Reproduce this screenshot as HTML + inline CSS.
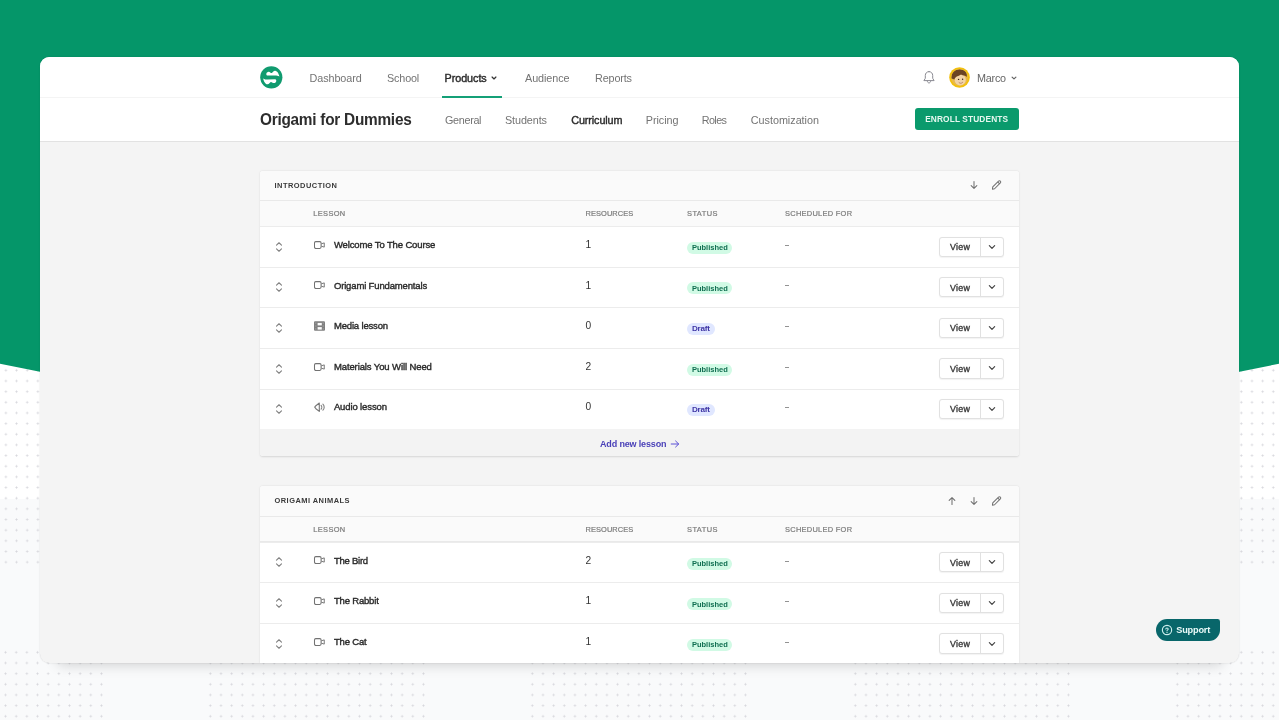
<!DOCTYPE html>
<html><head><meta charset="utf-8"><title>Origami for Dummies</title>
<style>
html,body{margin:0;padding:0}
body{width:1279px;height:720px;overflow:hidden;position:relative;background:#f9fafb;font-family:"Liberation Sans", sans-serif;}
.white{position:absolute;left:0;top:0;width:1279px;height:499px;background:#fff}
.green{position:absolute;left:0;top:0}
.dots{position:absolute;background-image:radial-gradient(circle at 50% 50%,#d6d6dc 0,#d6d6dc 0.7px,rgba(214,214,220,0) 1.35px);background-size:10.667px 10.667px}
.card{position:absolute;left:40px;top:57px;width:1199.3px;height:606.1px;background:#f4f4f4;border-radius:9.5px;overflow:hidden;will-change:transform;box-shadow:0 0 1.5px rgba(0,0,0,0.18)}
.shadow{position:absolute;left:56px;top:600px;width:1167.5px;height:56px;border-radius:8px;box-shadow:0 9px 13px rgba(0,0,0,0.17)}
.nav{position:absolute;left:0;top:0;width:100%;height:40px;background:#fff;border-bottom:1px solid #f4f4f4}
.sub{position:absolute;left:0;top:41px;width:100%;height:42.8px;background:#fff;border-bottom:1.6px solid #e2e2e2}
.t{position:absolute;white-space:pre;line-height:1}
.i{position:absolute;overflow:visible}
.ul{position:absolute;left:402px;top:39px;width:60px;height:1.6px;background:#14a077}
.btn{position:absolute;left:874.5px;top:50.8px;width:104.5px;height:22.5px;border-radius:3px;background:#0a9a6c}
.sec{position:absolute;left:219.5px;width:759.6px;background:#fff;border-radius:3px;box-shadow:0 0.8px 2px rgba(0,0,0,0.13);}
.sh{position:absolute;left:0;top:0;width:100%;height:29.6px;background:#fafafa;border-bottom:1px solid #e9e9e9;border-radius:3px 3px 0 0}
.ch{position:absolute;left:0;top:30.6px;width:100%;height:24.7px;background:#fafafa;border-bottom:1px solid #e9e9e9}
.row{position:absolute;left:0;width:100%;height:40.58px;background:linear-gradient(#ececec,#ececec) 0 0/100% 1px no-repeat #fff}
.ft{position:absolute;left:0;width:100%;height:27.3px;background:#f3f3f3;border-radius:0 0 3px 3px}
.bd{position:absolute;border-radius:7px}
.pub{background:#d1fae5}
.dr{background:#e0e7ff}
.dash{position:absolute;width:3.4px;height:1px;background:#939393}
.vb{position:absolute;width:64.6px;height:20.2px;box-sizing:border-box;border:1px solid #e1e1e1;border-radius:3px;background:#fff;box-shadow:0 0.7px 1px rgba(0,0,0,0.05)}
.vb i{position:absolute;left:40.2px;top:0;width:1px;height:100%;background:#e1e1e1}
.support{position:absolute;left:1116.3px;top:561.7px;width:64.2px;height:22.4px;background:#08666a;border-radius:11.2px 2.5px 11.2px 11.2px}
</style></head><body>
<div class="white"></div>
<div class="dots" style="left:-106.50px;top:364.92px;width:224.01px;height:202.67px;"></div><div class="dots" style="left:1235.87px;top:364.92px;width:224.01px;height:202.67px;"></div><div class="dots" style="left:-116.87px;top:647.17px;width:224.01px;height:85.34px;"></div><div class="dots" style="left:205.42px;top:647.17px;width:224.01px;height:85.34px;"></div><div class="dots" style="left:527.17px;top:647.17px;width:224.01px;height:85.34px;"></div><div class="dots" style="left:849.67px;top:647.17px;width:224.01px;height:85.34px;"></div><div class="dots" style="left:1172.17px;top:647.17px;width:224.01px;height:85.34px;"></div>
<svg class="green" width="1279" height="500" viewBox="0 0 1279 500"><polygon points="0,0 1279,0 1279,363.8 639.5,491.7 0,363.8" fill="#059669"/></svg>
<div class="shadow"></div>
<div class="card">
 <div class="nav"></div>
 <div class="sub"></div>
 <div class="ul"></div>
 <svg class="i" style="left:219.9px;top:9.1px" width="22.6" height="22.6" viewBox="0 0 24 24"><circle cx="12" cy="12" r="11.8" fill="#109b6f"/><path d="M6.7 8.7 C6.7 6.9 8.4 5.9 10 6.3 C11.1 6.6 11.6 7.7 12.5 7.4 C13.5 7.1 14.3 4.9 16.1 5 C18.6 5.2 20.1 8.5 20.6 11.2 C19.2 10.1 17.6 10 16 10 L8.2 10.2 C7.3 10.2 6.7 9.6 6.7 8.7 Z" fill="#fff"/><path transform="rotate(180 12 12.2)" d="M6.7 8.7 C6.7 6.9 8.4 5.9 10 6.3 C11.1 6.6 11.6 7.7 12.5 7.4 C13.5 7.1 14.3 4.9 16.1 5 C18.6 5.2 20.1 8.5 20.6 11.2 C19.2 10.1 17.6 10 16 10 L8.2 10.2 C7.3 10.2 6.7 9.6 6.7 8.7 Z" fill="#fff"/></svg>
 <svg class="i" style="left:449.40px;top:15.90px" width="10" height="10" viewBox="0 0 10 10"><path d="M3.10 4.05 L5 5.95 L6.90 4.05" fill="none" stroke="#333" stroke-width="1.25" stroke-linecap="round" stroke-linejoin="round"/></svg>
 <svg class="i" style="left:882.2px;top:13px" width="14" height="15" viewBox="0 0 14 15"><path d="M7 1.6 C4.7 1.6 3.3 3.4 3.3 5.5 L3.3 8.3 L1.9 10.6 L12.1 10.6 L10.7 8.3 L10.7 5.5 C10.7 3.4 9.3 1.6 7 1.6 Z M5.3 11 C5.4 12.2 6.1 12.9 7 12.9 C7.9 12.9 8.6 12.2 8.7 11" fill="none" stroke="#8b8b93" stroke-width="1" stroke-linejoin="round" stroke-linecap="round"/></svg>
 <svg class="i" style="left:909px;top:10px" width="21" height="21" viewBox="0 0 21 21"><defs><clipPath id="av"><circle cx="10.5" cy="10.5" r="8.4"/></clipPath></defs><circle cx="10.5" cy="10.5" r="10.3" fill="#f2c00e"/><g clip-path="url(#av)"><rect x="0" y="0" width="21" height="21" fill="#e9b949"/><ellipse cx="11.2" cy="12.8" rx="5.6" ry="5.6" fill="#f1d3a6"/><path d="M2.5 11.5 C2 5 7 2.2 11 2.6 C15.5 2.6 18.5 5.5 17.8 10 C16.5 8.5 14 8.8 12 7.6 C10 9.4 6.5 9 5.4 12.6 Z" fill="#6b4423"/><circle cx="9.6" cy="12.4" r="0.7" fill="#3a2a1a"/><circle cx="13.6" cy="12.2" r="0.7" fill="#3a2a1a"/><path d="M9.8 15.4 C11 16.4 12.8 16.3 13.8 15.2" stroke="#a0522d" stroke-width="0.7" fill="#fff"/></g></svg>
 <svg class="i" style="left:969.30px;top:15.50px" width="10" height="10" viewBox="0 0 10 10"><path d="M3.10 4.05 L5 5.95 L6.90 4.05" fill="none" stroke="#666" stroke-width="1.2" stroke-linecap="round" stroke-linejoin="round"/></svg>
 <div class="btn"></div>
 <span class="t" style="left:269.50px;top:15.86px;font-size:10.8px;color:#737373;letter-spacing:-0.072px;">Dashboard</span>
<span class="t" style="left:347.00px;top:15.86px;font-size:10.8px;color:#737373;letter-spacing:-0.153px;">School</span>
<span class="t" style="left:404.50px;top:15.86px;font-size:10.8px;color:#2b2b2b;letter-spacing:-0.051px;-webkit-text-stroke:0.4px #2b2b2b;">Products</span>
<span class="t" style="left:485.00px;top:15.86px;font-size:10.8px;color:#737373;letter-spacing:-0.076px;">Audience</span>
<span class="t" style="left:555.00px;top:15.86px;font-size:10.8px;color:#737373;letter-spacing:-0.135px;">Reports</span>
<span class="t" style="left:936.90px;top:15.86px;font-size:10.8px;color:#666;letter-spacing:-0.200px;">Marco</span>
<span class="t" style="left:220.00px;top:54.29px;font-size:16.2px;color:#2d2d2d;letter-spacing:-0.272px;font-weight:700;transform:scaleX(0.95);transform-origin:0 0;">Origami for Dummies</span>
<span class="t" style="left:405.00px;top:57.86px;font-size:10.8px;color:#737373;letter-spacing:-0.320px;">General</span>
<span class="t" style="left:465.00px;top:57.86px;font-size:10.8px;color:#737373;letter-spacing:-0.089px;">Students</span>
<span class="t" style="left:531.25px;top:57.86px;font-size:10.8px;color:#2b2b2b;letter-spacing:-0.106px;-webkit-text-stroke:0.4px #2b2b2b;">Curriculum</span>
<span class="t" style="left:605.75px;top:57.86px;font-size:10.8px;color:#737373;letter-spacing:-0.044px;">Pricing</span>
<span class="t" style="left:661.75px;top:57.86px;font-size:10.8px;color:#737373;letter-spacing:-0.590px;">Roles</span>
<span class="t" style="left:710.75px;top:57.86px;font-size:10.8px;color:#737373;letter-spacing:-0.014px;">Customization</span>
<span class="t" style="left:885.20px;top:58.17px;font-size:8.3px;color:#e6f8f0;letter-spacing:0.130px;font-weight:700;">ENROLL STUDENTS</span>
 <div class="sec" style="top:113.50px;height:285.90px">
<div class="sh"></div><div class="ch"></div>
<div class="row" style="top:55.70px">
<svg class="i" style="left:14.50px;top:13.60px" width="10" height="14" viewBox="0 0 10 14"><path d="M2.5 5.2 L5 2.75 L7.5 5.2 M2.5 8.8 L5 11.25 L7.5 8.8" fill="none" stroke="#828282" stroke-width="1.1" stroke-linecap="round" stroke-linejoin="round"/></svg>
<svg class="i" style="left:53.80px;top:12.60px" width="13" height="12" viewBox="0 0 13 12"><rect x="1.5" y="2.6" width="6.6" height="6.8" rx="1.3" fill="none" stroke="#727272" stroke-width="1.05"/><path d="M8.4 4.8 L11.25 3.9 L11.25 8.1 L8.4 7.2" fill="none" stroke="#727272" stroke-width="0.95" stroke-linejoin="round"/></svg>
<div class="bd pub" style="left:427.60px;top:15.7px;width:45.2px;height:12px"></div>
<div class="dash" style="left:525.70px;top:18.7px"></div>
<div class="vb" style="left:679.80px;top:10.4px"><i></i></div>
<svg class="i" style="left:727.80px;top:15.50px" width="10" height="10" viewBox="0 0 10 10"><path d="M2.35 3.65 L5 6.35 L7.65 3.65" fill="none" stroke="#444" stroke-width="1.2" stroke-linecap="round" stroke-linejoin="round"/></svg>
</div>
<div class="row" style="top:96.28px">
<svg class="i" style="left:14.50px;top:13.60px" width="10" height="14" viewBox="0 0 10 14"><path d="M2.5 5.2 L5 2.75 L7.5 5.2 M2.5 8.8 L5 11.25 L7.5 8.8" fill="none" stroke="#828282" stroke-width="1.1" stroke-linecap="round" stroke-linejoin="round"/></svg>
<svg class="i" style="left:53.80px;top:12.60px" width="13" height="12" viewBox="0 0 13 12"><rect x="1.5" y="2.6" width="6.6" height="6.8" rx="1.3" fill="none" stroke="#727272" stroke-width="1.05"/><path d="M8.4 4.8 L11.25 3.9 L11.25 8.1 L8.4 7.2" fill="none" stroke="#727272" stroke-width="0.95" stroke-linejoin="round"/></svg>
<div class="bd pub" style="left:427.60px;top:15.7px;width:45.2px;height:12px"></div>
<div class="dash" style="left:525.70px;top:18.7px"></div>
<div class="vb" style="left:679.80px;top:10.4px"><i></i></div>
<svg class="i" style="left:727.80px;top:15.50px" width="10" height="10" viewBox="0 0 10 10"><path d="M2.35 3.65 L5 6.35 L7.65 3.65" fill="none" stroke="#444" stroke-width="1.2" stroke-linecap="round" stroke-linejoin="round"/></svg>
</div>
<div class="row" style="top:136.86px">
<svg class="i" style="left:14.50px;top:13.60px" width="10" height="14" viewBox="0 0 10 14"><path d="M2.5 5.2 L5 2.75 L7.5 5.2 M2.5 8.8 L5 11.25 L7.5 8.8" fill="none" stroke="#828282" stroke-width="1.1" stroke-linecap="round" stroke-linejoin="round"/></svg>
<svg class="i" style="left:53.80px;top:12.45px" width="13" height="12" viewBox="0 0 13 12"><rect x="1" y="1.2" width="11" height="9.6" rx="1.1" fill="#7f7f7f"/><rect x="4.6" y="2.9" width="4.2" height="2.5" fill="#fbfbfb"/><rect x="4.6" y="7.1" width="4.2" height="2.5" fill="#fbfbfb"/><rect x="2.2" y="2.5" width="1.2" height="1.2" fill="#a3a3a3"/><rect x="2.2" y="5.4" width="1.2" height="1.2" fill="#a3a3a3"/><rect x="2.2" y="8.3" width="1.2" height="1.2" fill="#a3a3a3"/><rect x="9.6" y="2.5" width="1.2" height="1.2" fill="#a3a3a3"/><rect x="9.6" y="5.4" width="1.2" height="1.2" fill="#a3a3a3"/><rect x="9.6" y="8.3" width="1.2" height="1.2" fill="#a3a3a3"/></svg>
<div class="bd dr" style="left:427.60px;top:15.3px;width:27.6px;height:12.2px"></div>
<div class="dash" style="left:525.70px;top:18.7px"></div>
<div class="vb" style="left:679.80px;top:10.4px"><i></i></div>
<svg class="i" style="left:727.80px;top:15.50px" width="10" height="10" viewBox="0 0 10 10"><path d="M2.35 3.65 L5 6.35 L7.65 3.65" fill="none" stroke="#444" stroke-width="1.2" stroke-linecap="round" stroke-linejoin="round"/></svg>
</div>
<div class="row" style="top:177.44px">
<svg class="i" style="left:14.50px;top:13.60px" width="10" height="14" viewBox="0 0 10 14"><path d="M2.5 5.2 L5 2.75 L7.5 5.2 M2.5 8.8 L5 11.25 L7.5 8.8" fill="none" stroke="#828282" stroke-width="1.1" stroke-linecap="round" stroke-linejoin="round"/></svg>
<svg class="i" style="left:53.80px;top:12.60px" width="13" height="12" viewBox="0 0 13 12"><rect x="1.5" y="2.6" width="6.6" height="6.8" rx="1.3" fill="none" stroke="#727272" stroke-width="1.05"/><path d="M8.4 4.8 L11.25 3.9 L11.25 8.1 L8.4 7.2" fill="none" stroke="#727272" stroke-width="0.95" stroke-linejoin="round"/></svg>
<div class="bd pub" style="left:427.60px;top:15.7px;width:45.2px;height:12px"></div>
<div class="dash" style="left:525.70px;top:18.7px"></div>
<div class="vb" style="left:679.80px;top:10.4px"><i></i></div>
<svg class="i" style="left:727.80px;top:15.50px" width="10" height="10" viewBox="0 0 10 10"><path d="M2.35 3.65 L5 6.35 L7.65 3.65" fill="none" stroke="#444" stroke-width="1.2" stroke-linecap="round" stroke-linejoin="round"/></svg>
</div>
<div class="row" style="top:218.02px">
<svg class="i" style="left:14.50px;top:13.60px" width="10" height="14" viewBox="0 0 10 14"><path d="M2.5 5.2 L5 2.75 L7.5 5.2 M2.5 8.8 L5 11.25 L7.5 8.8" fill="none" stroke="#828282" stroke-width="1.1" stroke-linecap="round" stroke-linejoin="round"/></svg>
<svg class="i" style="left:53.80px;top:12.60px" width="13" height="12" viewBox="0 0 13 12"><path d="M1.7 6.2 L2.9 4.7 L6.3 2 L6.3 10.4 L2.9 7.7 Z" fill="none" stroke="#777" stroke-width="1.1" stroke-linejoin="round"/><path d="M8.1 4.3 C9 5.2 9 7.2 8.1 8.1 M9.9 3.2 C11.6 4.8 11.6 7.6 9.9 9.2" fill="none" stroke="#808080" stroke-width="1.1" stroke-linecap="round"/></svg>
<div class="bd dr" style="left:427.60px;top:15.3px;width:27.6px;height:12.2px"></div>
<div class="dash" style="left:525.70px;top:18.7px"></div>
<div class="vb" style="left:679.80px;top:10.4px"><i></i></div>
<svg class="i" style="left:727.80px;top:15.50px" width="10" height="10" viewBox="0 0 10 10"><path d="M2.35 3.65 L5 6.35 L7.65 3.65" fill="none" stroke="#444" stroke-width="1.2" stroke-linecap="round" stroke-linejoin="round"/></svg>
</div>
<div class="ft" style="top:258.60px"></div>
<svg class="i" style="left:410.00px;top:268.00px" width="10" height="10" viewBox="0 0 10 10"><path d="M1.2 5 L8.6 5 M5.6 2 L8.7 5 L5.6 8" fill="none" stroke="#5b50d6" stroke-width="1" stroke-linecap="round" stroke-linejoin="round"/></svg>
<svg class="i" style="left:708.70px;top:8.90px" width="12" height="12" viewBox="0 0 12 12"><path d="M6 2.55 L6 9.3 M3.15 6.6 L6 9.45 L8.85 6.6" fill="none" stroke="#707070" stroke-width="1.05" stroke-linecap="round" stroke-linejoin="round"/></svg>
<svg class="i" style="left:730.50px;top:8.70px" width="12.6" height="12.2" viewBox="0 0 12 12"><path d="M2.2 10 L2.5 7.8 L8.2 2.1 C8.7 1.6 9.5 1.6 10 2.1 C10.5 2.6 10.5 3.4 10 3.9 L4.3 9.6 Z M7.4 2.9 L9.2 4.7" fill="none" stroke="#707070" stroke-width="1" stroke-linejoin="round" stroke-linecap="round"/></svg>
<span class="t" style="left:15.00px;top:11.19px;font-size:7.45px;color:#3a3a3a;letter-spacing:0.497px;font-weight:700;">INTRODUCTION</span>
<span class="t" style="left:53.75px;top:39.44px;font-size:7.45px;color:#7b7b7b;letter-spacing:0.362px;-webkit-text-stroke:0.2px #7b7b7b;">LESSON</span>
<span class="t" style="left:326.00px;top:39.44px;font-size:7.45px;color:#7b7b7b;letter-spacing:0.078px;-webkit-text-stroke:0.2px #7b7b7b;">RESOURCES</span>
<span class="t" style="left:427.50px;top:39.44px;font-size:7.45px;color:#7b7b7b;letter-spacing:0.453px;-webkit-text-stroke:0.2px #7b7b7b;">STATUS</span>
<span class="t" style="left:525.50px;top:39.44px;font-size:7.45px;color:#7b7b7b;letter-spacing:0.280px;-webkit-text-stroke:0.2px #7b7b7b;">SCHEDULED FOR</span>
<span class="t" style="left:74.40px;top:69.46px;font-size:9.5px;color:#2a2a2a;letter-spacing:-0.127px;-webkit-text-stroke:0.38px #2a2a2a;">Welcome To The Course</span>
<span class="t" style="left:326.00px;top:69.67px;font-size:10.2px;color:#333;letter-spacing:0.000px;">1</span>
<span class="t" style="left:432.40px;top:73.80px;font-size:7.5px;color:#0f6e50;letter-spacing:0.001px;font-weight:700;">Published</span>
<span class="t" style="left:690.50px;top:72.42px;font-size:8.9px;color:#3a3a3a;letter-spacing:0.307px;-webkit-text-stroke:0.35px #3a3a3a;">View</span>
<span class="t" style="left:74.40px;top:110.04px;font-size:9.5px;color:#2a2a2a;letter-spacing:-0.148px;-webkit-text-stroke:0.38px #2a2a2a;">Origami Fundamentals</span>
<span class="t" style="left:326.00px;top:110.25px;font-size:10.2px;color:#333;letter-spacing:0.000px;">1</span>
<span class="t" style="left:432.40px;top:114.38px;font-size:7.5px;color:#0f6e50;letter-spacing:0.001px;font-weight:700;">Published</span>
<span class="t" style="left:690.50px;top:113.00px;font-size:8.9px;color:#3a3a3a;letter-spacing:0.307px;-webkit-text-stroke:0.35px #3a3a3a;">View</span>
<span class="t" style="left:74.40px;top:150.62px;font-size:9.5px;color:#2a2a2a;letter-spacing:-0.162px;-webkit-text-stroke:0.38px #2a2a2a;">Media lesson</span>
<span class="t" style="left:326.00px;top:150.83px;font-size:10.2px;color:#333;letter-spacing:0.000px;">0</span>
<span class="t" style="left:432.40px;top:154.10px;font-size:8.1px;color:#3f36a6;letter-spacing:-0.198px;font-weight:700;">Draft</span>
<span class="t" style="left:690.50px;top:153.58px;font-size:8.9px;color:#3a3a3a;letter-spacing:0.307px;-webkit-text-stroke:0.35px #3a3a3a;">View</span>
<span class="t" style="left:74.40px;top:191.20px;font-size:9.5px;color:#2a2a2a;letter-spacing:-0.106px;-webkit-text-stroke:0.38px #2a2a2a;">Materials You Will Need</span>
<span class="t" style="left:326.00px;top:191.41px;font-size:10.2px;color:#333;letter-spacing:0.000px;">2</span>
<span class="t" style="left:432.40px;top:195.54px;font-size:7.5px;color:#0f6e50;letter-spacing:0.001px;font-weight:700;">Published</span>
<span class="t" style="left:690.50px;top:194.16px;font-size:8.9px;color:#3a3a3a;letter-spacing:0.307px;-webkit-text-stroke:0.35px #3a3a3a;">View</span>
<span class="t" style="left:74.40px;top:231.78px;font-size:9.5px;color:#2a2a2a;letter-spacing:-0.119px;-webkit-text-stroke:0.38px #2a2a2a;">Audio lesson</span>
<span class="t" style="left:326.00px;top:231.99px;font-size:10.2px;color:#333;letter-spacing:0.000px;">0</span>
<span class="t" style="left:432.40px;top:235.26px;font-size:8.1px;color:#3f36a6;letter-spacing:-0.198px;font-weight:700;">Draft</span>
<span class="t" style="left:690.50px;top:234.74px;font-size:8.9px;color:#3a3a3a;letter-spacing:0.307px;-webkit-text-stroke:0.35px #3a3a3a;">View</span>
<span class="t" style="left:340.50px;top:269.08px;font-size:9.0px;color:#4a41b8;letter-spacing:-0.155px;font-weight:700;">Add new lesson</span>
</div>
 <div class="sec" style="top:429.20px;height:177.44px">
<div class="sh"></div><div class="ch"></div>
<div class="row" style="top:55.70px">
<svg class="i" style="left:14.50px;top:13.60px" width="10" height="14" viewBox="0 0 10 14"><path d="M2.5 5.2 L5 2.75 L7.5 5.2 M2.5 8.8 L5 11.25 L7.5 8.8" fill="none" stroke="#828282" stroke-width="1.1" stroke-linecap="round" stroke-linejoin="round"/></svg>
<svg class="i" style="left:53.80px;top:12.60px" width="13" height="12" viewBox="0 0 13 12"><rect x="1.5" y="2.6" width="6.6" height="6.8" rx="1.3" fill="none" stroke="#727272" stroke-width="1.05"/><path d="M8.4 4.8 L11.25 3.9 L11.25 8.1 L8.4 7.2" fill="none" stroke="#727272" stroke-width="0.95" stroke-linejoin="round"/></svg>
<div class="bd pub" style="left:427.60px;top:15.7px;width:45.2px;height:12px"></div>
<div class="dash" style="left:525.70px;top:18.7px"></div>
<div class="vb" style="left:679.80px;top:10.4px"><i></i></div>
<svg class="i" style="left:727.80px;top:15.50px" width="10" height="10" viewBox="0 0 10 10"><path d="M2.35 3.65 L5 6.35 L7.65 3.65" fill="none" stroke="#444" stroke-width="1.2" stroke-linecap="round" stroke-linejoin="round"/></svg>
</div>
<div class="row" style="top:96.28px">
<svg class="i" style="left:14.50px;top:13.60px" width="10" height="14" viewBox="0 0 10 14"><path d="M2.5 5.2 L5 2.75 L7.5 5.2 M2.5 8.8 L5 11.25 L7.5 8.8" fill="none" stroke="#828282" stroke-width="1.1" stroke-linecap="round" stroke-linejoin="round"/></svg>
<svg class="i" style="left:53.80px;top:12.60px" width="13" height="12" viewBox="0 0 13 12"><rect x="1.5" y="2.6" width="6.6" height="6.8" rx="1.3" fill="none" stroke="#727272" stroke-width="1.05"/><path d="M8.4 4.8 L11.25 3.9 L11.25 8.1 L8.4 7.2" fill="none" stroke="#727272" stroke-width="0.95" stroke-linejoin="round"/></svg>
<div class="bd pub" style="left:427.60px;top:15.7px;width:45.2px;height:12px"></div>
<div class="dash" style="left:525.70px;top:18.7px"></div>
<div class="vb" style="left:679.80px;top:10.4px"><i></i></div>
<svg class="i" style="left:727.80px;top:15.50px" width="10" height="10" viewBox="0 0 10 10"><path d="M2.35 3.65 L5 6.35 L7.65 3.65" fill="none" stroke="#444" stroke-width="1.2" stroke-linecap="round" stroke-linejoin="round"/></svg>
</div>
<div class="row" style="top:136.86px">
<svg class="i" style="left:14.50px;top:13.60px" width="10" height="14" viewBox="0 0 10 14"><path d="M2.5 5.2 L5 2.75 L7.5 5.2 M2.5 8.8 L5 11.25 L7.5 8.8" fill="none" stroke="#828282" stroke-width="1.1" stroke-linecap="round" stroke-linejoin="round"/></svg>
<svg class="i" style="left:53.80px;top:12.60px" width="13" height="12" viewBox="0 0 13 12"><rect x="1.5" y="2.6" width="6.6" height="6.8" rx="1.3" fill="none" stroke="#727272" stroke-width="1.05"/><path d="M8.4 4.8 L11.25 3.9 L11.25 8.1 L8.4 7.2" fill="none" stroke="#727272" stroke-width="0.95" stroke-linejoin="round"/></svg>
<div class="bd pub" style="left:427.60px;top:15.7px;width:45.2px;height:12px"></div>
<div class="dash" style="left:525.70px;top:18.7px"></div>
<div class="vb" style="left:679.80px;top:10.4px"><i></i></div>
<svg class="i" style="left:727.80px;top:15.50px" width="10" height="10" viewBox="0 0 10 10"><path d="M2.35 3.65 L5 6.35 L7.65 3.65" fill="none" stroke="#444" stroke-width="1.2" stroke-linecap="round" stroke-linejoin="round"/></svg>
</div>
<svg class="i" style="left:686.10px;top:8.80px" width="12" height="12" viewBox="0 0 12 12"><path d="M6 9.45 L6 2.7 M3.15 5.4 L6 2.55 L8.85 5.4" fill="none" stroke="#707070" stroke-width="1.05" stroke-linecap="round" stroke-linejoin="round"/></svg>
<svg class="i" style="left:708.70px;top:8.90px" width="12" height="12" viewBox="0 0 12 12"><path d="M6 2.55 L6 9.3 M3.15 6.6 L6 9.45 L8.85 6.6" fill="none" stroke="#707070" stroke-width="1.05" stroke-linecap="round" stroke-linejoin="round"/></svg>
<svg class="i" style="left:730.50px;top:8.70px" width="12.6" height="12.2" viewBox="0 0 12 12"><path d="M2.2 10 L2.5 7.8 L8.2 2.1 C8.7 1.6 9.5 1.6 10 2.1 C10.5 2.6 10.5 3.4 10 3.9 L4.3 9.6 Z M7.4 2.9 L9.2 4.7" fill="none" stroke="#707070" stroke-width="1" stroke-linejoin="round" stroke-linecap="round"/></svg>
<span class="t" style="left:15.00px;top:11.19px;font-size:7.45px;color:#3a3a3a;letter-spacing:0.478px;font-weight:700;">ORIGAMI ANIMALS</span>
<span class="t" style="left:53.75px;top:39.44px;font-size:7.45px;color:#7b7b7b;letter-spacing:0.362px;-webkit-text-stroke:0.2px #7b7b7b;">LESSON</span>
<span class="t" style="left:326.00px;top:39.44px;font-size:7.45px;color:#7b7b7b;letter-spacing:0.078px;-webkit-text-stroke:0.2px #7b7b7b;">RESOURCES</span>
<span class="t" style="left:427.50px;top:39.44px;font-size:7.45px;color:#7b7b7b;letter-spacing:0.453px;-webkit-text-stroke:0.2px #7b7b7b;">STATUS</span>
<span class="t" style="left:525.50px;top:39.44px;font-size:7.45px;color:#7b7b7b;letter-spacing:0.280px;-webkit-text-stroke:0.2px #7b7b7b;">SCHEDULED FOR</span>
<span class="t" style="left:74.40px;top:69.46px;font-size:9.5px;color:#2a2a2a;letter-spacing:-0.244px;-webkit-text-stroke:0.38px #2a2a2a;">The Bird</span>
<span class="t" style="left:326.00px;top:69.67px;font-size:10.2px;color:#333;letter-spacing:0.000px;">2</span>
<span class="t" style="left:432.40px;top:73.80px;font-size:7.5px;color:#0f6e50;letter-spacing:0.001px;font-weight:700;">Published</span>
<span class="t" style="left:690.50px;top:72.42px;font-size:8.9px;color:#3a3a3a;letter-spacing:0.307px;-webkit-text-stroke:0.35px #3a3a3a;">View</span>
<span class="t" style="left:74.40px;top:110.04px;font-size:9.5px;color:#2a2a2a;letter-spacing:-0.176px;-webkit-text-stroke:0.38px #2a2a2a;">The Rabbit</span>
<span class="t" style="left:326.00px;top:110.25px;font-size:10.2px;color:#333;letter-spacing:0.000px;">1</span>
<span class="t" style="left:432.40px;top:114.38px;font-size:7.5px;color:#0f6e50;letter-spacing:0.001px;font-weight:700;">Published</span>
<span class="t" style="left:690.50px;top:113.00px;font-size:8.9px;color:#3a3a3a;letter-spacing:0.307px;-webkit-text-stroke:0.35px #3a3a3a;">View</span>
<span class="t" style="left:74.40px;top:150.62px;font-size:9.5px;color:#2a2a2a;letter-spacing:-0.166px;-webkit-text-stroke:0.38px #2a2a2a;">The Cat</span>
<span class="t" style="left:326.00px;top:150.83px;font-size:10.2px;color:#333;letter-spacing:0.000px;">1</span>
<span class="t" style="left:432.40px;top:154.96px;font-size:7.5px;color:#0f6e50;letter-spacing:0.001px;font-weight:700;">Published</span>
<span class="t" style="left:690.50px;top:153.58px;font-size:8.9px;color:#3a3a3a;letter-spacing:0.307px;-webkit-text-stroke:0.35px #3a3a3a;">View</span>
</div>
 <div class="support"></div>
 <svg class="i" style="left:1121.2px;top:566.9px" width="12" height="12" viewBox="0 0 12 12"><circle cx="6" cy="6" r="4.65" fill="none" stroke="#cdeeed" stroke-width="1.1"/><path d="M4.8 5 C4.8 3.6 7.2 3.6 7.2 5 C7.2 5.9 6 5.8 6 6.8" fill="none" stroke="#cdeeed" stroke-width="1.05" stroke-linecap="round"/><circle cx="6" cy="8.3" r="0.65" fill="#cdeeed"/></svg>
 <span class="t" style="left:1136.30px;top:568.61px;font-size:9.2px;color:#eafaf9;letter-spacing:-0.220px;font-weight:700;">Support</span>
</div>
</body></html>
